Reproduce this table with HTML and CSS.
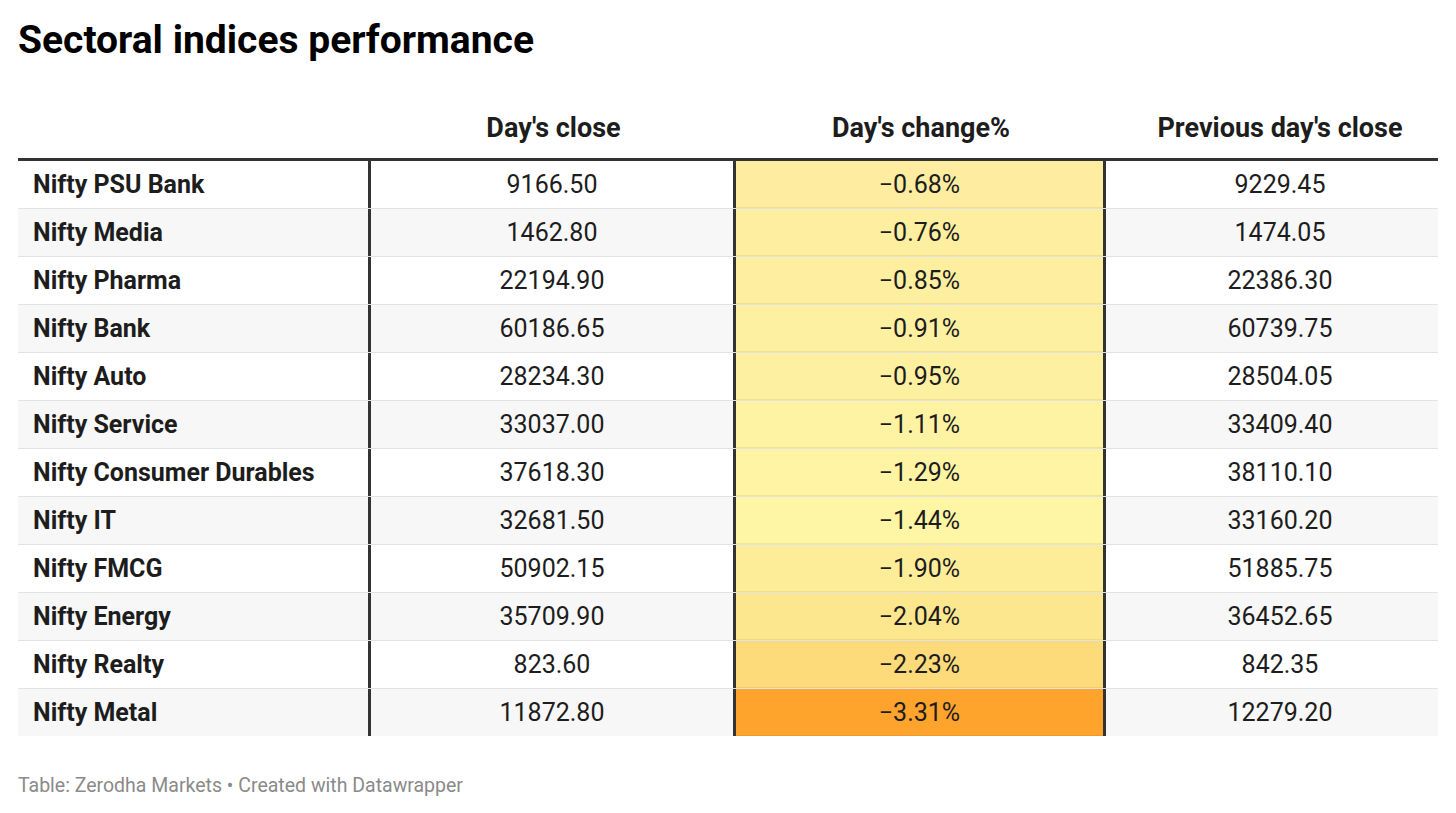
FILE: index.html
```html
<!DOCTYPE html>
<html>
<head>
<meta charset="utf-8">
<link rel="stylesheet" href="styles.css">
</head>
<body>
<div class="chart">
  <h1 class="title">Sectoral indices performance</h1>
  <div class="table">
    <div class="row head">
      <div class="cell name"></div>
      <div class="cell">Day's close</div>
      <div class="cell">Day's change%</div>
      <div class="cell last">Previous day's close</div>
    </div>
    <div class="row"><div class="cell name">Nifty PSU Bank</div><div class="cell num">9166.50</div><div class="cell chg" style="background:#feeda0">−0.68%</div><div class="cell num last">9229.45</div></div>
    <div class="row alt"><div class="cell name">Nifty Media</div><div class="cell num">1462.80</div><div class="cell chg" style="background:#feee9f">−0.76%</div><div class="cell num last">1474.05</div></div>
    <div class="row"><div class="cell name">Nifty Pharma</div><div class="cell num">22194.90</div><div class="cell chg" style="background:#feefa0">−0.85%</div><div class="cell num last">22386.30</div></div>
    <div class="row alt"><div class="cell name">Nifty Bank</div><div class="cell num">60186.65</div><div class="cell chg" style="background:#fef0a1">−0.91%</div><div class="cell num last">60739.75</div></div>
    <div class="row"><div class="cell name">Nifty Auto</div><div class="cell num">28234.30</div><div class="cell chg" style="background:#fef0a1">−0.95%</div><div class="cell num last">28504.05</div></div>
    <div class="row alt"><div class="cell name">Nifty Service</div><div class="cell num">33037.00</div><div class="cell chg" style="background:#fef2a3">−1.11%</div><div class="cell num last">33409.40</div></div>
    <div class="row"><div class="cell name">Nifty Consumer Durables</div><div class="cell num">37618.30</div><div class="cell chg" style="background:#fef4a4">−1.29%</div><div class="cell num last">38110.10</div></div>
    <div class="row alt"><div class="cell name">Nifty IT</div><div class="cell num">32681.50</div><div class="cell chg" style="background:#fff6a5">−1.44%</div><div class="cell num last">33160.20</div></div>
    <div class="row"><div class="cell name">Nifty FMCG</div><div class="cell num">50902.15</div><div class="cell chg" style="background:#feed98">−1.90%</div><div class="cell num last">51885.75</div></div>
    <div class="row alt"><div class="cell name">Nifty Energy</div><div class="cell num">35709.90</div><div class="cell chg" style="background:#fde78e">−2.04%</div><div class="cell num last">36452.65</div></div>
    <div class="row"><div class="cell name">Nifty Realty</div><div class="cell num">823.60</div><div class="cell chg" style="background:#fddb7b">−2.23%</div><div class="cell num last">842.35</div></div>
    <div class="row alt end"><div class="cell name">Nifty Metal</div><div class="cell num">11872.80</div><div class="cell chg" style="background:#fea32b">−3.31%</div><div class="cell num last">12279.20</div></div>
  </div>
  <div class="footer">Table: Zerodha Markets • Created with Datawrapper</div>
</div>
</body>
</html>
```

FILE: styles.css
```css
* { box-sizing: border-box; }
html, body { margin: 0; padding: 0; background: #fff; }
body {
  font-family: Roboto, "Liberation Sans", Arial, sans-serif;
  color: #1d1d1d;
}
.chart {
  padding: 18px 18px 0 18px;
  width: 1456px;
}
.title {
  margin: 0;
  font-size: 39px;
  font-weight: 700;
  line-height: 44px;
  color: #000;
}
.table {
  margin-top: 40px;
  width: 1420px;
}
.row {
  display: grid;
  grid-template-columns: 353px 365px 370px 1fr;
  height: 48px;
  border-bottom: 1px solid #e2e2e2;
  background: #fff;
}
.row.alt { background: #f7f7f7; }
.row.end { border-bottom: none; height: 47px; }
.row.head {
  height: 59px;
  background: #fff;
  border-bottom: 3px solid #333;
  font-weight: 700;
}
.cell {
  display: flex;
  align-items: center;
  justify-content: center;
  font-size: 25px;
  padding: 0 8px;
}
.row.head .cell {
  align-items: flex-end;
  padding-bottom: 14px;
  font-size: 27px;
}
.cell.name {
  justify-content: flex-start;
  padding-left: 15px;
  font-weight: 700;
  border-right: 3px solid #333;
}
.row.head .cell.name { border-right: none; }
.cell.num { font-weight: 400; }
.row:not(.head) .cell:nth-child(2) { border-right: 3px solid #333; }
.cell.chg {
  border-right: 3px solid #333;
  box-shadow: inset 0 -1px 0 rgba(0,0,0,0.06);
}
.cell.last { padding-left: 24px; }
.footer {
  margin-top: 38px;
  font-size: 19.5px;
  color: #8a8a8a;
}
```
